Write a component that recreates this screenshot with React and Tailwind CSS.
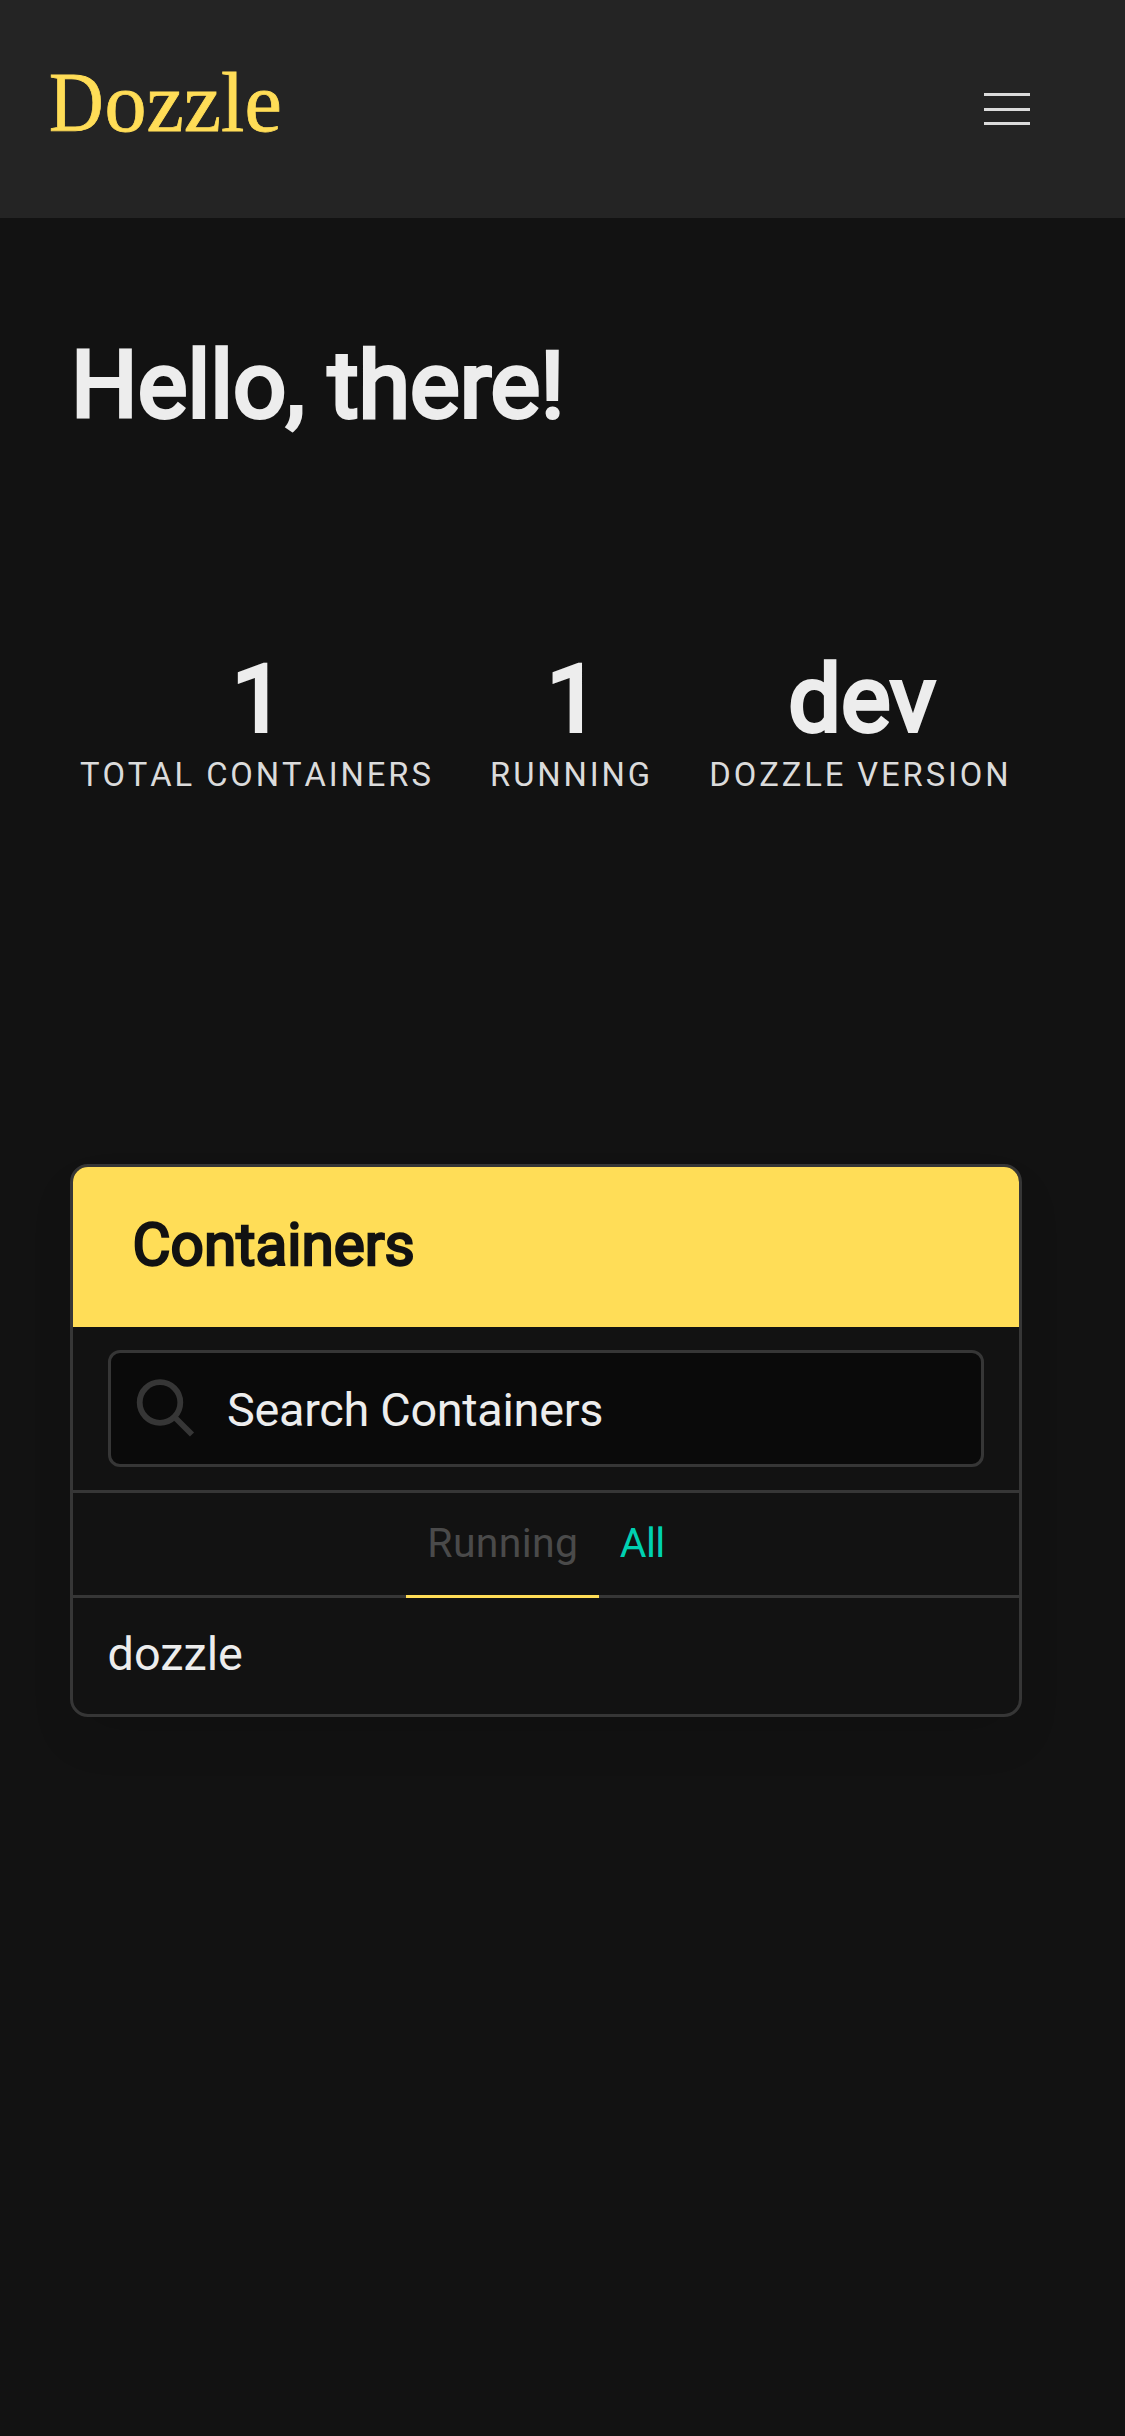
const stats = [
  { value: "1", label: "Total Containers" },
  { value: "1", label: "Running" },
  { value: "dev", label: "Dozzle Version" },
];

function Header() {
  return (
    <header className="flex h-[218px] items-start justify-between bg-[#242424] pl-[49px] pr-[95px]">
      <a className="mt-[53px] font-['Liberation_Serif',serif] text-[84px] leading-[100px] text-[#ffdd57] [-webkit-text-stroke:0.8px_#ffdd57]">
        <span className="inline-block w-[55.5px] origin-left scale-x-[0.9]">D</span>ozzle
      </a>
      <button aria-label="Menu" className="mt-[93px] flex w-[46px] flex-col gap-[11.5px]">
        <span className="h-[3px] bg-[#dbdbdb]" />
        <span className="h-[3px] bg-[#dbdbdb]" />
        <span className="h-[3px] bg-[#dbdbdb]" />
      </button>
    </header>
  );
}

function Stats() {
  return (
    <section className="mt-[207px] flex justify-between pl-[10px] pr-[10px]">
      {stats.map((s) => (
        <div key={s.label} className="flex flex-col items-center whitespace-nowrap">
          <p className="h-[105px] pl-[3px] text-[93.6px] leading-[106px] [-webkit-text-stroke:3.9px_#ededed]">{s.value}</p>
          <p className="text-[32.76px] leading-[48px] tracking-[2.9px] text-[#dbdbdb] uppercase [font-kerning:none]">{s.label}</p>
        </div>
      ))}
    </section>
  );
}

function SearchIcon() {
  return (
    <svg viewBox="0 0 60 60" className="-mt-[2px] size-[60px] shrink-0" fill="none" stroke="#363636" strokeWidth="5.8">
      <circle cx="24" cy="24.5" r="20.3" />
      <path d="M38.2 38.7 L56 56.5" />
    </svg>
  );
}

function ContainersPanel() {
  return (
    <section className="mt-[365px] h-[553px] overflow-hidden rounded-[18px] border-[3px] border-[#363636] shadow-[0_24px_48px_-6px_rgba(10,10,10,0.1)]">
      <h2 className="h-[160px] bg-[#ffdd57] pl-[59.5px] text-[58.5px] leading-[157px] text-[#121212] [-webkit-text-stroke:2.4px_#121212]">
        Containers
      </h2>
      <div className="h-[166px] border-b-[3px] border-[#363636] px-[34.5px] pt-[23px]">
        <div className="flex h-[117px] items-center rounded-[12px] border-[3px] border-[#363636] bg-[#0a0a0a] pl-[25px] text-[46.8px]">
          <SearchIcon />
          <span className="ml-[31.5px] pt-[3px] leading-[60px] tracking-[-0.3px]">Search Containers</span>
        </div>
      </div>
      <div className="flex h-[104.5px] justify-center text-[41px] leading-[101px]">
        <div className="flex grow border-b-[3px] border-[#363636]" />
        <a className="border-b-[3px] border-[#ffdd57] px-[21px] tracking-[0.3px] text-[#4a4a4a]">Running</a>
        <a className="border-b-[3px] border-[#363636] px-[20.5px] tracking-[-0.6px] text-[#00d1b2]">All</a>
        <div className="flex grow border-b-[3px] border-[#363636]" />
      </div>
      <div className="pl-[34.5px] text-[46.8px] leading-[113px]">dozzle</div>
    </section>
  );
}

export default function App() {
  return (
    <div className="h-[2436px] w-[1125px] overflow-hidden bg-[#121212] font-[Roboto,sans-serif] text-[#ededed]">
      <Header />
      <main className="pr-[103.5px] pl-[70px]">
        <h1 className="mt-[113px] ml-px text-[93.6px] leading-[108px] [-webkit-text-stroke:3.9px_#ededed]">Hello, there!</h1>
        <Stats />
        <ContainersPanel />
      </main>
    </div>
  );
}
